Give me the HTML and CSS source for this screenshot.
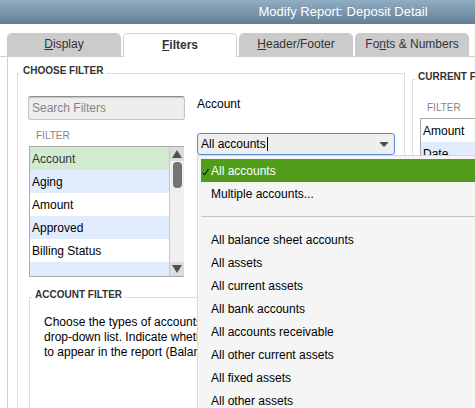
FILE: index.html
```html
<!DOCTYPE html>
<html lang="en">
<head>
    <meta charset="UTF-8">
    <meta name="viewport" content="width=device-width, initial-scale=1.0">
    <title>Modify Report: Deposit Detail</title>
    <link rel="stylesheet" href="styles.css">
</head>
<body>
    <header class="title-bar">
        <h1>Modify Report: Deposit Detail</h1>
    </header>

    <div class="tabs" role="tablist">
        <button class="tab" role="tab" accesskey="d"><u>D</u>isplay</button>
        <button class="tab active" role="tab" accesskey="f" aria-selected="true"><u>F</u>ilters</button>
        <button class="tab" role="tab" accesskey="h"><u>H</u>eader/Footer</button>
        <button class="tab" role="tab" accesskey="n">Fo<u>n</u>ts &amp; Numbers</button>
    </div>

    <main class="panel" role="tabpanel">
        <fieldset class="group choose">
            <legend>CHOOSE FILTER</legend>

            <div class="choose-row">
                <div class="filter-column">
                    <input class="search" type="text" placeholder="Search Filters" aria-label="Search Filters">
                    <div class="filter-box">
                        <div class="list-label">FILTER</div>
                        <div class="list short">
                            <ul role="listbox" aria-label="Filter">
                                <li role="option" class="selected" aria-selected="true">Account</li>
                                <li role="option">Aging</li>
                                <li role="option">Amount</li>
                                <li role="option">Approved</li>
                                <li role="option">Billing Status</li>
                                <li role="presentation"></li>
                            </ul>
                            <div class="scrollbar">
                                <button class="scroll-btn" aria-label="Scroll up">
                                    <svg width="10" height="8" viewBox="0 0 10 8"><path d="M5 0L10 8H0z" fill="#505050"/></svg>
                                </button>
                                <div class="track"><div class="thumb"></div></div>
                                <button class="scroll-btn" aria-label="Scroll down">
                                    <svg width="10" height="8" viewBox="0 0 10 8"><path d="M0 0H10L5 8z" fill="#505050"/></svg>
                                </button>
                            </div>
                        </div>
                    </div>
                </div>

                <div class="value-column">
                    <label for="account">Account</label>
                    <div class="combo">
                        <input id="account" type="text" value="All accounts" role="combobox" aria-expanded="true" aria-controls="account-menu">
                        <span class="caret"></span>
                        <button class="combo-btn" aria-label="Open list">
                            <svg width="8" height="5" viewBox="0 0 8 5"><path d="M0 0H8V1L4 5L0 1z" fill="#505050"/></svg>
                        </button>
                        <ul class="menu" id="account-menu" role="listbox" aria-label="Account">
                            <li role="option" class="checked" aria-selected="true">
                                <svg class="check" width="7" height="8" viewBox="0 0 7 8"><path d="M0.5 4.5L2.5 7L6.5 1" fill="none" stroke="#000"/></svg>
                                All accounts
                            </li>
                            <li role="option">Multiple accounts...</li>
                            <li role="separator" class="separator"></li>
                            <li role="option">All balance sheet accounts</li>
                            <li role="option">All assets</li>
                            <li role="option">All current assets</li>
                            <li role="option">All bank accounts</li>
                            <li role="option">All accounts receivable</li>
                            <li role="option">All other current assets</li>
                            <li role="option">All fixed assets</li>
                            <li role="option">All other assets</li>
                        </ul>
                    </div>
                </div>
            </div>

            <fieldset class="group help">
                <legend>ACCOUNT FILTER</legend>
                <p>Choose the types of accounts<br>drop-down list. Indicate whether<br>to appear in the report (Balance</p>
            </fieldset>
        </fieldset>

        <fieldset class="group current">
            <legend>CURRENT FILTER CHOICES</legend>
            <div class="filter-box">
                <div class="list-label">FILTER</div>
                <div class="list">
                    <ul role="listbox" aria-label="Current filter choices">
                        <li role="option">Amount</li>
                        <li role="option">Date</li>
                    </ul>
                </div>
            </div>
        </fieldset>
    </main>
</body>
</html>
```
FILE: styles.css
```css
* {
    box-sizing: border-box;
}

body {
    font-family: "Liberation Sans", Arial, sans-serif;
    font-size: 12px;
    line-height: 15px;
    color: #000;
    background-color: #fff;
    display: flex;
    flex-direction: column;
    height: 100vh;
    margin: 0;
    overflow: hidden;
}

ul {
    list-style: none;
    margin: 0;
    padding: 0;
}

input,
button {
    font: inherit;
    margin: 0;
}

/* title bar */
.title-bar {
    flex: none;
    padding-left: 211px;
    text-align: center;
    background: linear-gradient(#91adc4, #617f95);
}

.title-bar h1 {
    margin: 0;
    font-size: 13px;
    font-weight: normal;
    line-height: 24px;
    color: #fff;
}

/* tabs */
.tabs {
    display: flex;
    flex: none;
    align-items: flex-end;
    gap: 2px;
    height: 33px;
    padding-left: 7px;
    border-bottom: 1px solid #d0d0d0;
}

.tab {
    flex: none;
    width: 114px;
    height: 23px;
    padding: 0;
    color: #333;
    background-color: #cbcbcb;
    border: none;
    border-radius: 5px 5px 0 0;
}

.tab.active {
    height: 24px;
    margin-bottom: -1px;
    font-weight: bold;
    background-color: #fff;
    border: 1px solid #d0d0d0;
    border-bottom: none;
}

/* panel */
.panel {
    display: flex;
    flex: 1;
    gap: 7px;
    margin-left: 7px;
    padding: 7px 0 0 9px;
    border-left: 1px solid #d0d0d0;
}

.group {
    min-width: 0;
    margin: 0;
    padding: 0;
    border: 1px solid #dedede;
    border-bottom: none;
}

.group legend {
    margin-left: 2px;
    padding: 1px 3px 5px;
    font-size: 10px;
    font-weight: bold;
    line-height: 12px;
    white-space: nowrap;
    color: #333;
}

.choose {
    display: flex;
    flex-direction: column;
    flex: 0 0 388px;
}

.choose-row {
    display: flex;
    gap: 12px;
    padding: 14px 9px 0 10px;
}

.filter-column {
    flex: none;
    width: 157px;
}

.search {
    display: block;
    width: 100%;
    height: 24px;
    padding: 0 3px;
    background-color: #eee;
    border: 1px solid #c4c4c4;
    border-top-color: #8e8e8e;
    border-radius: 3px;
    box-shadow: inset 0 1px 1px #c4c4c4;
}

.search::placeholder {
    color: #858585;
}

.filter-column .filter-box {
    margin: 9px 1px 0;
}

.list-label {
    padding: 0 0 3px 7px;
    font-size: 10px;
    line-height: 14px;
    color: #858585;
}

/* lists */
.list {
    display: flex;
    border: 1px solid #aaa;
    border-right: none;
}

.list.short {
    height: 131px;
}

.list ul {
    flex: 1;
    overflow: hidden;
}

.list li {
    height: 23px;
    padding: 1px 0 0 2px;
    line-height: 23px;
}

.list li:nth-child(even) {
    background-color: #e1edff;
}

.list li.selected {
    color: #333;
    background-color: #d0ebd0;
}

.scrollbar {
    display: flex;
    flex-direction: column;
    width: 15px;
    background-color: #f0f0f0;
    border-left: 1px solid #c8c8c8;
}

.scroll-btn {
    display: flex;
    align-items: center;
    justify-content: center;
    height: 14px;
    padding: 0;
    background-color: #dcdcdc;
    border: none;
}

.track {
    flex: 1;
    padding: 1px 2px;
}

.thumb {
    width: 9px;
    height: 26px;
    margin: 0 auto;
    background-color: #717777;
    border-radius: 4px;
}

/* account combo */
.value-column {
    flex: 1;
}

.value-column label {
    display: block;
    padding-top: 1px;
    margin-bottom: 21px;
}

.combo {
    position: relative;
    display: flex;
    height: 22px;
    background-color: #eee;
    border: 1px solid #5b8bd0;
    border-radius: 3px;
}

.combo input {
    flex: 1;
    min-width: 0;
    padding: 0 3px;
    background: none;
    border: none;
    outline: none;
}

.caret {
    position: absolute;
    top: 3px;
    left: 69px;
    width: 1px;
    height: 14px;
    background-color: #000;
}

.combo-btn {
    display: flex;
    align-items: center;
    justify-content: center;
    width: 20px;
    padding: 0;
    background: none;
    border: none;
}

/* the menu runs on to the right edge of the window */
.menu {
    position: absolute;
    top: 21px;
    left: -1px;
    z-index: 1;
    width: calc(100vw - 197px);
    padding: 3px 0 3px 3px;
    background-color: #f5f5f5;
    border: 1px solid #dadada;
    border-right: none;
}

.menu li {
    position: relative;
    height: 23px;
    padding: 1px 0 0 10px;
    line-height: 23px;
}

.menu .checked {
    color: #fff;
    background-color: #4f9d1a;
}

.check {
    position: absolute;
    top: 9px;
    left: 1px;
}

.menu .separator {
    padding: 11px 0;
}

.separator::before {
    content: "";
    display: block;
    height: 1px;
    background-color: #c2c2c2;
}

/* help text */
.help {
    flex: 1;
    margin: 11px 9px 0 11px;
}

.help p {
    margin: 9px 14px;
    white-space: nowrap;
}

.current {
    flex: 1;
    margin-top: 6px;
    border-right: none;
}

.current .filter-box {
    padding: 13px 0 0 7px;
}
```
